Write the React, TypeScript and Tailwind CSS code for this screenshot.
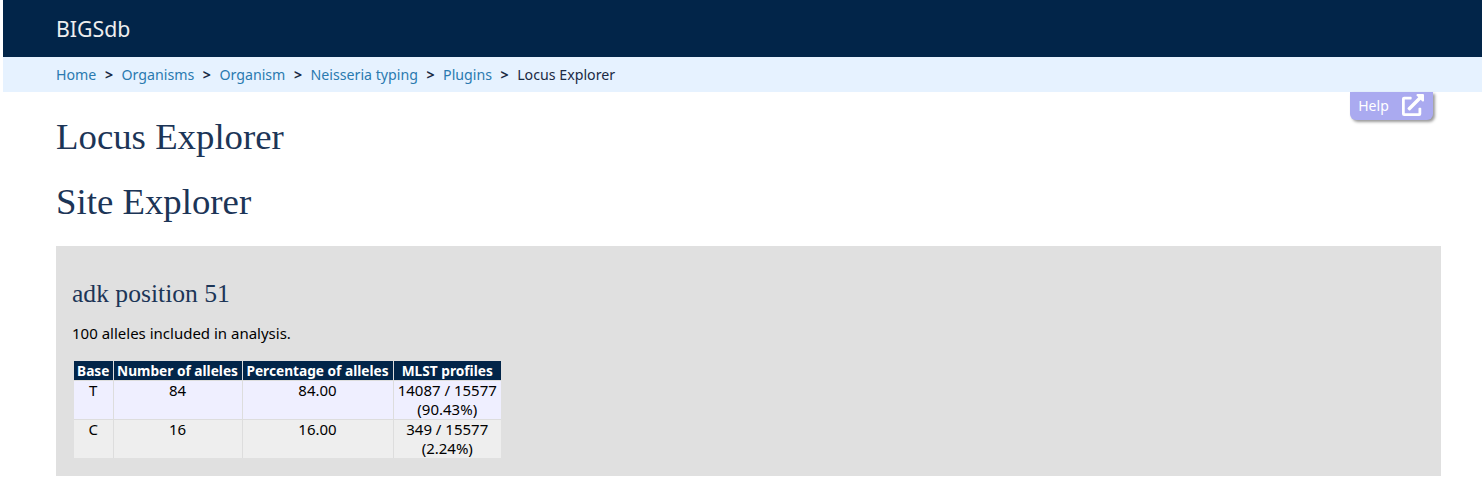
import React from 'react';
import { FaExternalLinkAlt } from 'react-icons/fa';

const crumbs = ['Home', 'Organisms', 'Organism', 'Neisseria typing', 'Plugins'];

const rows = [
  { base: 'T', count: '84', pct: '84.00', mlst: ['14087 / 15577', '(90.43%)'], bg: 'bg-[#efefff]' },
  { base: 'C', count: '16', pct: '16.00', mlst: ['349 / 15577', '(2.24%)'], bg: 'bg-[#eeeeee]' },
];

const App: React.FC = () => {
  return (
    <div className="relative h-[501px] overflow-hidden bg-white pl-[3px] font-['Noto_Sans',sans-serif] text-[15px] text-black">
      <div className="flex h-[57px] items-center bg-[#022549] pl-[53px] pt-[1px] text-[21.3px] text-[#eeeeee]">BIGSdb</div>
      <div className="flex h-[35px] items-center bg-[#e6f2ff] pl-[53px] text-[14.2px] text-[#1a2a44]">
        {crumbs.map((c) => (
          <React.Fragment key={c}>
            <a className="text-[#2a7ab0]">{c}</a>
            <span className="mx-[8.5px] font-bold text-[#1a2a44]">&gt;</span>
          </React.Fragment>
        ))}
        <span>Locus Explorer</span>
      </div>

      <div className="absolute right-[49px] top-[92px] flex h-[28px] w-[83px] items-center justify-center gap-[12px] rounded-b-[6px] bg-[#aaaaf0] pb-[2px] text-[14px] text-white shadow-[2px_2px_3px_#999999]">
        <span>Help</span>
        <FaExternalLinkAlt className="h-[22px] w-[24px]" />
      </div>

      <div className="pl-[53px] pr-[41px] font-['Liberation_Serif',serif] text-[#1c3557]">
        <h1 className="pt-[22px] text-[36.8px] leading-[45px]">Locus Explorer</h1>
        <h2 className="pt-[20px] text-[36.8px] leading-[45px]">Site Explorer</h2>
      </div>

      <div className="ml-[53px] mr-[41px] mt-[22px] h-[230px] bg-[#e0e0e0] px-[16px] pt-[33px]">
        <h3 className="font-['Liberation_Serif',serif] text-[25.6px] leading-[30px] text-[#1c3557]">adk position 51</h3>
        <p className="mt-[14px] leading-[20px]">100 alleles included in analysis.</p>
        <table className="ml-[2px] mt-[18px] border-collapse text-center leading-[19px]">
          <thead>
            <tr className="bg-[#022549] text-[13.7px] text-white">
              <th className="w-[39px] border-r border-[#dddddd] font-bold">Base</th>
              <th className="w-[129px] border-r border-[#dddddd] font-bold">Number of alleles</th>
              <th className="w-[151px] border-r border-[#dddddd] font-bold">Percentage of alleles</th>
              <th className="w-[108px] font-bold">MLST profiles</th>
            </tr>
          </thead>
          <tbody>
            {rows.map((r) => (
              <tr key={r.base} className={`${r.bg} border-t border-[#dddddd] align-top`}>
                <td className="border-r border-[#dddddd]">{r.base}</td>
                <td className="border-r border-[#dddddd]">{r.count}</td>
                <td className="border-r border-[#dddddd]">{r.pct}</td>
                <td>
                  {r.mlst[0]}
                  <br />
                  {r.mlst[1]}
                </td>
              </tr>
            ))}
          </tbody>
        </table>
      </div>
    </div>
  );
};

export default App;
